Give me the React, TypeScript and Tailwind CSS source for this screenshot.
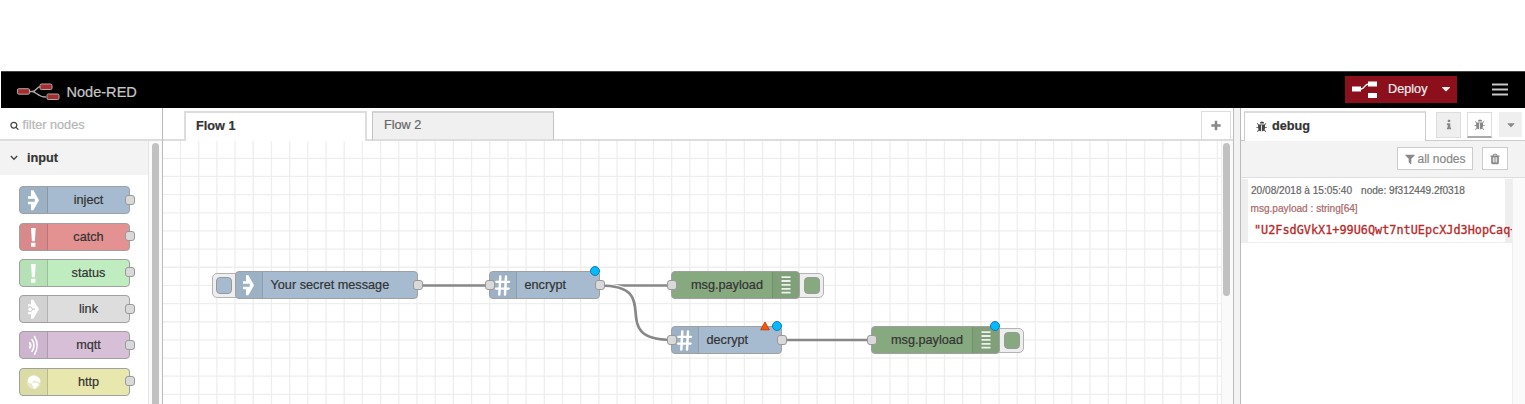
import type { ReactNode } from "react";

const ICONS = {
  bug: "M1632 960q0 26-19 45t-45 19h-224q0 171-67 290l208 209q19 19 19 45t-19 45q-18 19-45 19t-45-19l-198-197q-5 5-15 13t-42 28.5-65 36.5-82 29-97 13v-896h-128v896q-51 0-101.500-13.500t-87-33-66-39-43.500-32.500l-15-14-183 207q-20 21-48 21-24 0-43-16-19-18-20.500-44.500t15.500-46.500l202-227q-58-114-58-274h-224q-26 0-45-19t-19-45 19-45 45-19h224v-294l-173-173q-19-19-19-45t19-45 45-19 45 19l173 173h844l173-173q19-19 45-19t45 19 19 45-19 45l-173 173v294h224q26 0 45 19t19 45zm-416-576h-640q0-133 93.500-226.500t226.500-93.500 226.500 93.500 93.500 226.500z",
  filter: "M1595 295q17 41-14 70l-493 493v742q0 42-39 59-13 5-25 5-27 0-45-19l-256-256q-19-19-19-45v-486l-493-493q-31-29-14-70 17-39 59-39h1280q42 0 59 39z",
  trash: "M704 1376v-704q0-14-9-23t-23-9h-64q-14 0-23 9t-9 23v704q0 14 9 23t23 9h64q14 0 23-9t9-23zm256 0v-704q0-14-9-23t-23-9h-64q-14 0-23 9t-9 23v704q0 14 9 23t23 9h64q14 0 23-9t9-23zm256 0v-704q0-14-9-23t-23-9h-64q-14 0-23 9t-9 23v704q0 14 9 23t23 9h64q14 0 23-9t9-23zm-544-992h448l-48-117q-7-9-17-11h-317q-10 2-17 11zm928 32v64q0 14-9 23t-23 9h-96v948q0 83-47 143.500t-113 60.500h-832q-66 0-113-58.500t-47-141.500v-952h-96q-14 0-23-9t-9-23v-64q0-14 9-23t23-9h309l70-167q15-37 54-63t79-26h320q40 0 79 26t54 63l70 167h309q14 0 23 9t9 23z",
  search: "M1216 832q0-185-131.500-316.500t-316.500-131.500-316.500 131.500-131.500 316.500 131.500 316.500 316.500 131.500 316.500-131.500 131.500-316.500zm512 832q0 52-38 90t-90 38q-54 0-90-38l-343-342q-179 124-399 124-143 0-273.500-55.500t-225-150-150-225-55.500-273.500 55.500-273.500 150-225 225-150 273.500-55.500 273.500 55.500 225 150 150 225 55.500 273.500q0 220-124 399l343 343q37 37 37 90z",
  info: "M1216 1344v128q0 26-19 45t-45 19h-512q-26 0-45-19t-19-45v-128q0-26 19-45t45-19h64v-384h-64q-26 0-45-19t-19-45v-128q0-26 19-45t45-19h384q26 0 45 19t19 45v576h64q26 0 45 19t19 45zm-128-1152v192q0 26-19 45t-45 19h-256q-26 0-45-19t-19-45v-192q0-26 19-45t45-19h256q26 0 45 19t19 45z",
  caret: "M1408 704q0 26-19 45l-448 448q-19 19-45 19t-45-19l-448-448q-19-19-19-45t19-45 45-19h896q26 0 45 19t19 45z",
  plus: "M1600 736v192q0 40-28 68t-68 28h-416v416q0 40-28 68t-68 28h-192q-40 0-68-28t-28-68v-416h-416q-40 0-68-28t-28-68v-192q0-40 28-68t68-28h416v-416q0-40 28-68t68-28h192q40 0 68 28t28 68v416h416q40 0 68 28t28 68z",
};

function Icon({ name, className }: { name: keyof typeof ICONS; className: string }) {
  return (
    <svg viewBox="0 0 1792 1792" fill="currentColor" className={`block shrink-0 ${className}`}>
      <path d={ICONS[name]} />
    </svg>
  );
}

type Glyph = "inject" | "alert" | "link" | "mqtt" | "http" | "hash" | "debug";

function NodeGlyph({ kind }: { kind: Glyph }) {
  const shapes: Record<Glyph, ReactNode> = {
    inject: (
      <path fill="#fff" d="M11 3.200h2.400L19 13.200l-5.600 10H11v-6H8v-2.500h6.800v-3H8V9.200h3z" />
    ),
    alert: <path fill="#fff" d="M11 4h4.700l-.8 13.200h-3zM11.100 18.800h4.300v3.900h-4.300z" />,
    link: (
      <g>
        <path fill="#fff" d="M11 3.700h2.300L19 13.200l-5.700 9.600H11v-4.600H8v-2.300l2 .2a2.900 2.900 0 0 0 2.800-2.100h2.200v-1.600h-2.200A2.900 2.900 0 0 0 10 10.300l-2 .2V8.300h3z" />
        <circle cx="10" cy="13.200" r="1.700" fill="#fff" />
      </g>
    ),
    mqtt: (
      <g fill="none" stroke="#fff" strokeLinecap="round">
        <path d="M9.800 11q1.600 2.400 0 4.800" strokeWidth="1.900" />
        <path d="M12 7.500q4 5.900 0 11.800" strokeWidth="1.600" />
        <path d="M14.500 4.500q5.400 8.900 0 17.800" strokeWidth="1.500" />
      </g>
    ),
    http: (
      <g>
        <circle cx="13.800" cy="13.200" r="6.900" fill="#fff" opacity=".4" />
        <path fill="#fff" d="M8 10.200q2-3.800 6.600-3.600l4.300 2.100 1.700 3.300-1.500 1.500-1.700-1.300-1.400.3-1-1-2.200.5-.9 2.400-1.700.1L8 13zM12.600 13.500l4.800.3 1.200 1.700-1.800 2.200-1.500 2.400-1.800-.5-.4-2.500-1.300-1.600z" />
      </g>
    ),
    hash: (
      <g fill="none" stroke="#fff" strokeLinecap="round">
        <path d="M11.300 4.500 10.300 22.500M17 4.500l-1 18" strokeWidth="2.500" />
        <path d="M7.300 9.800h12.800M6.900 16.600h12.800" strokeWidth="2.300" />
      </g>
    ),
    debug: (
      <path fill="#fff" opacity=".85" d="M9.500 4.200h9V6h-9zM9.500 8.100h9v1.800h-9zM9.500 12h9v1.800h-9zM9.500 15.900h9v1.800h-9zM9.500 19.700h9v1.800h-9z" />
    ),
  };
  return (
    <svg viewBox="0 0 28 28" className="mt-[2px] block h-7 w-7 shrink-0">
      {shapes[kind]}
    </svg>
  );
}

const Port = ({ className }: { className: string }) => (
  <span className={`absolute h-[10px] w-[10px] rounded-[3px] border border-[#999] bg-[#d9d9d9] ${className}`} />
);

const palette: { label: string; glyph: Glyph; color: string }[] = [
  { label: "inject", glyph: "inject", color: "bg-[#a6bbcf]" },
  { label: "catch", glyph: "alert", color: "bg-[#e49191]" },
  { label: "status", glyph: "alert", color: "bg-[#c0edc0]" },
  { label: "link", glyph: "link", color: "bg-[#dddddd]" },
  { label: "mqtt", glyph: "mqtt", color: "bg-[#d8bfd8]" },
  { label: "http", glyph: "http", color: "bg-[#e7e7ae]" },
];

function Palette() {
  return (
    <aside className="flex w-[163px] shrink-0 flex-col border-r border-[#bbb]">
      <div className="flex h-[33px] shrink-0 items-center border-b-2 border-[#ddd] pl-[10px] pt-[3px]">
        <Icon name="search" className="h-[9px] w-[9px] text-[#444]" />
        <span className="ml-[3.500px] pt-px text-[12.700px] text-[#b5b5b5]">filter nodes</span>
      </div>
      <div className="flex min-h-0 flex-1">
        <div className="w-[149px] border-r border-[#e4e4e4]">
          <div className="flex h-[34px] items-center bg-[#f3f3f3] pl-[10px]">
            <svg viewBox="0 0 8 6" className="h-[6px] w-2" fill="none" stroke="#444" strokeWidth="1.300">
              <path d="m.8 1 3.200 3.300L7.200 1" />
            </svg>
            <span className="ml-[9px] pt-px text-[12.700px] font-bold text-[#333]">input</span>
          </div>
          <div className="flex flex-col gap-[8.300px] pl-[19px] pt-[11.300px]">
            {palette.map((n) => (
              <div key={n.label} className={`relative flex h-[28px] w-[111px] shrink-0 rounded-[4px] border border-[#a0a0a0] ${n.color}`}>
                <div className="flex w-[28px] items-center overflow-hidden rounded-l-[3px] border-r border-black/15 bg-black/5">
                  <NodeGlyph kind={n.glyph} />
                </div>
                <span className="flex-1 pt-px text-center text-[12.700px] leading-[25px] text-[#333]">{n.label}</span>
                <Port className="-right-[6px] top-[7.500px]" />
              </div>
            ))}
          </div>
        </div>
        <div className="flex flex-1 justify-center bg-[#fafafa] pt-[2px]">
          <div className="mr-[1px] w-[7px] rounded-t-[4px] bg-[#c1c1c1]" />
        </div>
      </div>
    </aside>
  );
}

const origin = { x: 163, y: 141 };

type FlowNodeProps = {
  x: number;
  y: number;
  w: number;
  label: string;
  glyph: Glyph;
  input?: boolean;
  output?: boolean;
  changed?: boolean;
  error?: boolean;
};

function FlowNode({ x, y, w, label, glyph, input, output, changed, error }: FlowNodeProps) {
  const debug = glyph === "debug";
  const fill = debug ? "bg-[#87a980]" : "bg-[#a6bbcf]";
  const button = debug || glyph === "inject";
  return (
    <div className="absolute h-[28px]" style={{ left: x - origin.x, top: y - origin.y, width: w }}>
      {button && (
        <div className={`absolute top-[2px] flex h-[25px] w-[29px] items-center rounded-[5px] border-[1.500px] border-[#b3b3b3] bg-[#eee] ${debug ? "-right-[24px] justify-end pr-[3px]" : "-left-[23px] pl-[3px]"}`}>
          <div className={`h-[17px] w-[16px] rounded-[4px] border border-[#999] ${fill}`} />
        </div>
      )}
      <div className={`relative flex h-full w-full rounded-[4px] border border-[#a0a0a0] ${fill} ${debug ? "flex-row-reverse" : ""}`}>
        <div className={`flex w-[27px] items-center justify-center overflow-hidden border-black/10 bg-black/5 ${debug ? "rounded-r-[3px] border-l" : "rounded-l-[3px] border-r"}`}>
          <NodeGlyph kind={glyph} />
        </div>
        <span className={`flex-1 whitespace-nowrap pt-px text-[12.700px] leading-[25px] text-[#333] ${debug ? "pl-[19px]" : "pl-[7.500px]"}`}>{label}</span>
      </div>
      {input && <Port className="-left-[4px] top-[9px]" />}
      {output && <Port className="-right-[5px] top-[9px]" />}
      {changed && <span className="absolute -top-[5px] right-0 h-[10px] w-[10px] rounded-full border border-[#1d77ab] bg-[#00bcff]" />}
      {error && (
        <svg viewBox="0 0 10 10" className="absolute -top-[5px] right-[11.500px] h-[10px] w-[10px]">
          <path d="M5 1 9.300 8.800H.7z" fill="#f50" stroke="#b8441c" strokeLinejoin="round" />
        </svg>
      )}
    </div>
  );
}

function Workspace() {
  return (
    <main className="flex w-[1071px] shrink-0 flex-col border-r border-[#bbb]">
      <div className="flex h-[33px] shrink-0 items-end">
        <div className="h-full w-[21px] border-b-2 border-[#ddd]" />
        <div className="flex h-[30px] w-[183px] items-center border-2 border-b-0 border-[#ddd] pl-[10px] text-[12.700px] font-bold text-[#333]">Flow 1</div>
        <div className="h-full w-[5px] border-b-2 border-[#ddd]" />
        <div className="flex h-[30px] w-[182px] items-center border border-b-2 border-t-2 border-[#c4c4c4] border-b-[#ddd] border-t-[#d4d4d4] bg-[#f0f0f0] pb-px pl-[11px] text-[12.700px] text-[#666]">Flow 2</div>
        <div className="h-full flex-1 border-b-2 border-[#ddd]" />
        <div className="flex h-[30px] w-[30px] items-center justify-center border border-b-2 border-[#ddd]">
          <Icon name="plus" className="h-[12px] w-[12px] text-[#888]" />
        </div>
        <div className="h-full w-[2px] border-b-2 border-[#ddd]" />
      </div>
      <div className="flex min-h-0 flex-1">
        <div className="relative w-[1058px] overflow-hidden">
          <svg viewBox="163 141 1058 263" className="block h-[263px] w-[1058px]" fill="none">
            <g stroke="#eee" strokeWidth="1.300">
              {Array.from({ length: 58 }, (_, i) => (
                <path key={i} d={`M${180.500 + i * 18.190} 141v263`} />
              ))}
              {Array.from({ length: 14 }, (_, i) => (
                <path key={i} d={`M163 ${158.300 + i * 18.160}h1058`} />
              ))}
            </g>
            <path d="M600 285.500h72" stroke="#fff" strokeWidth="5" />
            <path d="M418 285.500h72M600 285.500h72M782 340h90" stroke="#888" strokeWidth="2.700" />
            <path d="M600 285.500C667 285.500 604 340 672 340" stroke="#fff" strokeWidth="4.500" />
            <path d="M600 285.500C667 285.500 604 340 672 340" stroke="#888" strokeWidth="2.700" />
          </svg>
          <FlowNode x={235} y={271} w={183} label="Your secret message" glyph="inject" output />
          <FlowNode x={489} y={271} w={110.500} label="encrypt" glyph="hash" input output changed />
          <FlowNode x={671} y={271} w={128.500} label="msg.payload" glyph="debug" input />
          <FlowNode x={671} y={325.500} w={110.500} label="decrypt" glyph="hash" input output changed error />
          <FlowNode x={871} y={325.500} w={128.500} label="msg.payload" glyph="debug" input changed />
        </div>
        <div className="flex flex-1 justify-center border-l border-[#eee] bg-[#fafafa] pt-[2px]">
          <div className="mr-[2px] h-[153px] w-[7px] rounded-full bg-[#c1c1c1]" />
        </div>
      </div>
    </main>
  );
}

function Sidebar() {
  return (
    <aside className="flex min-w-0 flex-1 flex-col border-l border-[#bbb]">
      <div className="flex h-[33px] shrink-0 items-end">
        <div className="h-full w-[3px] border-b border-[#ccc]" />
        <div className="flex h-[30px] w-[182px] items-center border border-b-0 border-t-2 border-[#ccc] border-t-[#ddd] pl-[11px]">
          <Icon name="bug" className="h-[12px] w-[12px] text-[#444]" />
          <span className="ml-[4px] text-[12.700px] font-bold text-[#333]">debug</span>
        </div>
        <div className="flex h-full flex-1 items-start border-b border-[#ccc] pl-[10px] pt-[4px] text-[#888]">
          <div className="flex h-[26px] w-[25px] items-center justify-center border border-[#ddd] bg-[#efefef]">
            <Icon name="info" className="h-[12px] w-[12px]" />
          </div>
          <div className="ml-[6px] flex h-[26px] w-[25px] items-center justify-center border border-b-2 border-[#ddd] border-b-[#aaa]">
            <Icon name="bug" className="h-[12px] w-[12px]" />
          </div>
          <div className="ml-[7px] flex h-[25px] w-[23px] items-center justify-center bg-[#efefef]">
            <Icon name="caret" className="h-[12px] w-[12px]" />
          </div>
        </div>
      </div>
      <div className="flex h-[37px] shrink-0 items-start justify-end gap-[9px] border-b border-[#ddd] bg-[#f3f3f3] pr-[17px] pt-[6px] text-[#888]">
        <div className="flex h-[23px] w-[76px] items-center border border-[#ccc] bg-white pl-[6px]">
          <Icon name="filter" className="h-[12px] w-[12px]" />
          <span className="ml-[1.500px] whitespace-nowrap pt-px text-[12px]">all nodes</span>
        </div>
        <div className="flex h-[23px] w-[26px] items-center justify-center border border-[#ccc] bg-white">
          <Icon name="trash" className="h-[12px] w-[12px]" />
        </div>
      </div>
      <div className="flex min-h-0 flex-1">
        <div className="w-[271px] overflow-hidden pt-px">
          <div className="h-[64px] whitespace-nowrap border-b border-l-[7px] border-r-[7px] border-[#eee]">
            <div className="flex gap-[9px] pl-[3px] pt-[5px] text-[10.100px] leading-[14px] text-[#666]">
              <span>20/08/2018 à 15:05:40</span>
              <span>node: 9f312449.2f0318</span>
            </div>
            <div className="pl-[2.500px] pt-[4px] text-[10.100px] leading-[14px] text-[#a66]">msg.payload : string[64]</div>
            <div className="pl-[6px] pt-[6px] font-['DejaVu_Sans_Mono',monospace] text-[11.840px] leading-[16px] text-[#b72828] [-webkit-text-stroke:0.300px]">
              "U2FsdGVkX1+99U6Qwt7ntUEpcXJd3HopCaq+
            </div>
          </div>
        </div>
        <div className="flex-1 border-l border-[#f0f0f0] bg-[#fafafa]" />
      </div>
    </aside>
  );
}

function Header() {
  return (
    <header className="ml-px flex h-[37px] shrink-0 items-center border-t border-[#444] bg-black">
      <svg viewBox="0 0 44 18" className="ml-[15px] mt-[2px] h-[18px] w-[44px]" fill="none">
        <path d="M13 9.500h3c5 0 4-5 9-5M16 9.500c5 0 5 5.500 14 5.500" stroke="#aaa" strokeWidth="1.300" />
        <g fill="#a92b2b" stroke="#aaa">
          <rect x="1.500" y="6.700" width="12" height="5.500" rx="1.300" />
          <rect x="24" y="2" width="12" height="5.500" rx="1.300" />
          <rect x="31" y="12" width="12" height="5.500" rx="1.300" />
        </g>
      </svg>
      <span className="ml-[6.500px] pt-[5px] text-[14.550px] text-[#c7c7c7]">Node-RED</span>
      <div className="mb-[2px] ml-auto flex h-[27px] w-[112px] items-center bg-[#8c101c] text-white">
        <svg viewBox="0 0 26 18" className="ml-[7px] h-[18px] w-[26px]" fill="#fff">
          <path d="M0 6.500h9v5H0zM16 1.500h9v5h-9zM16 13h9v5h-9z" />
          <path d="M9 9c4 0 3-5 8-5" fill="none" stroke="#fff" strokeWidth="1.300" />
        </svg>
        <span className="ml-[10px] pt-[2px] text-[12.700px] text-[#eee]">Deploy</span>
        <Icon name="caret" className="ml-[11px] h-[14px] w-[14px] text-[#eee]" />
      </div>
      <svg viewBox="0 0 16 14" className="mb-[1px] ml-[35px] mr-[17px] h-[14px] w-[16px]" fill="#c7c7c7">
        <path d="M0 .5h16v2H0zM0 5.500h16v2H0zM0 10.500h16v2H0z" />
      </svg>
    </header>
  );
}

export default function App() {
  return (
    <div className="flex h-[404px] w-[1525px] flex-col overflow-hidden bg-white pt-[71px] font-['Liberation_Sans',Arial,sans-serif] [-webkit-text-stroke:0.200px]">
      <Header />
      <div className="flex min-h-0 flex-1">
        <Palette />
        <Workspace />
        <div className="w-[6px] shrink-0 bg-[#f3f3f3]" />
        <Sidebar />
      </div>
    </div>
  );
}
